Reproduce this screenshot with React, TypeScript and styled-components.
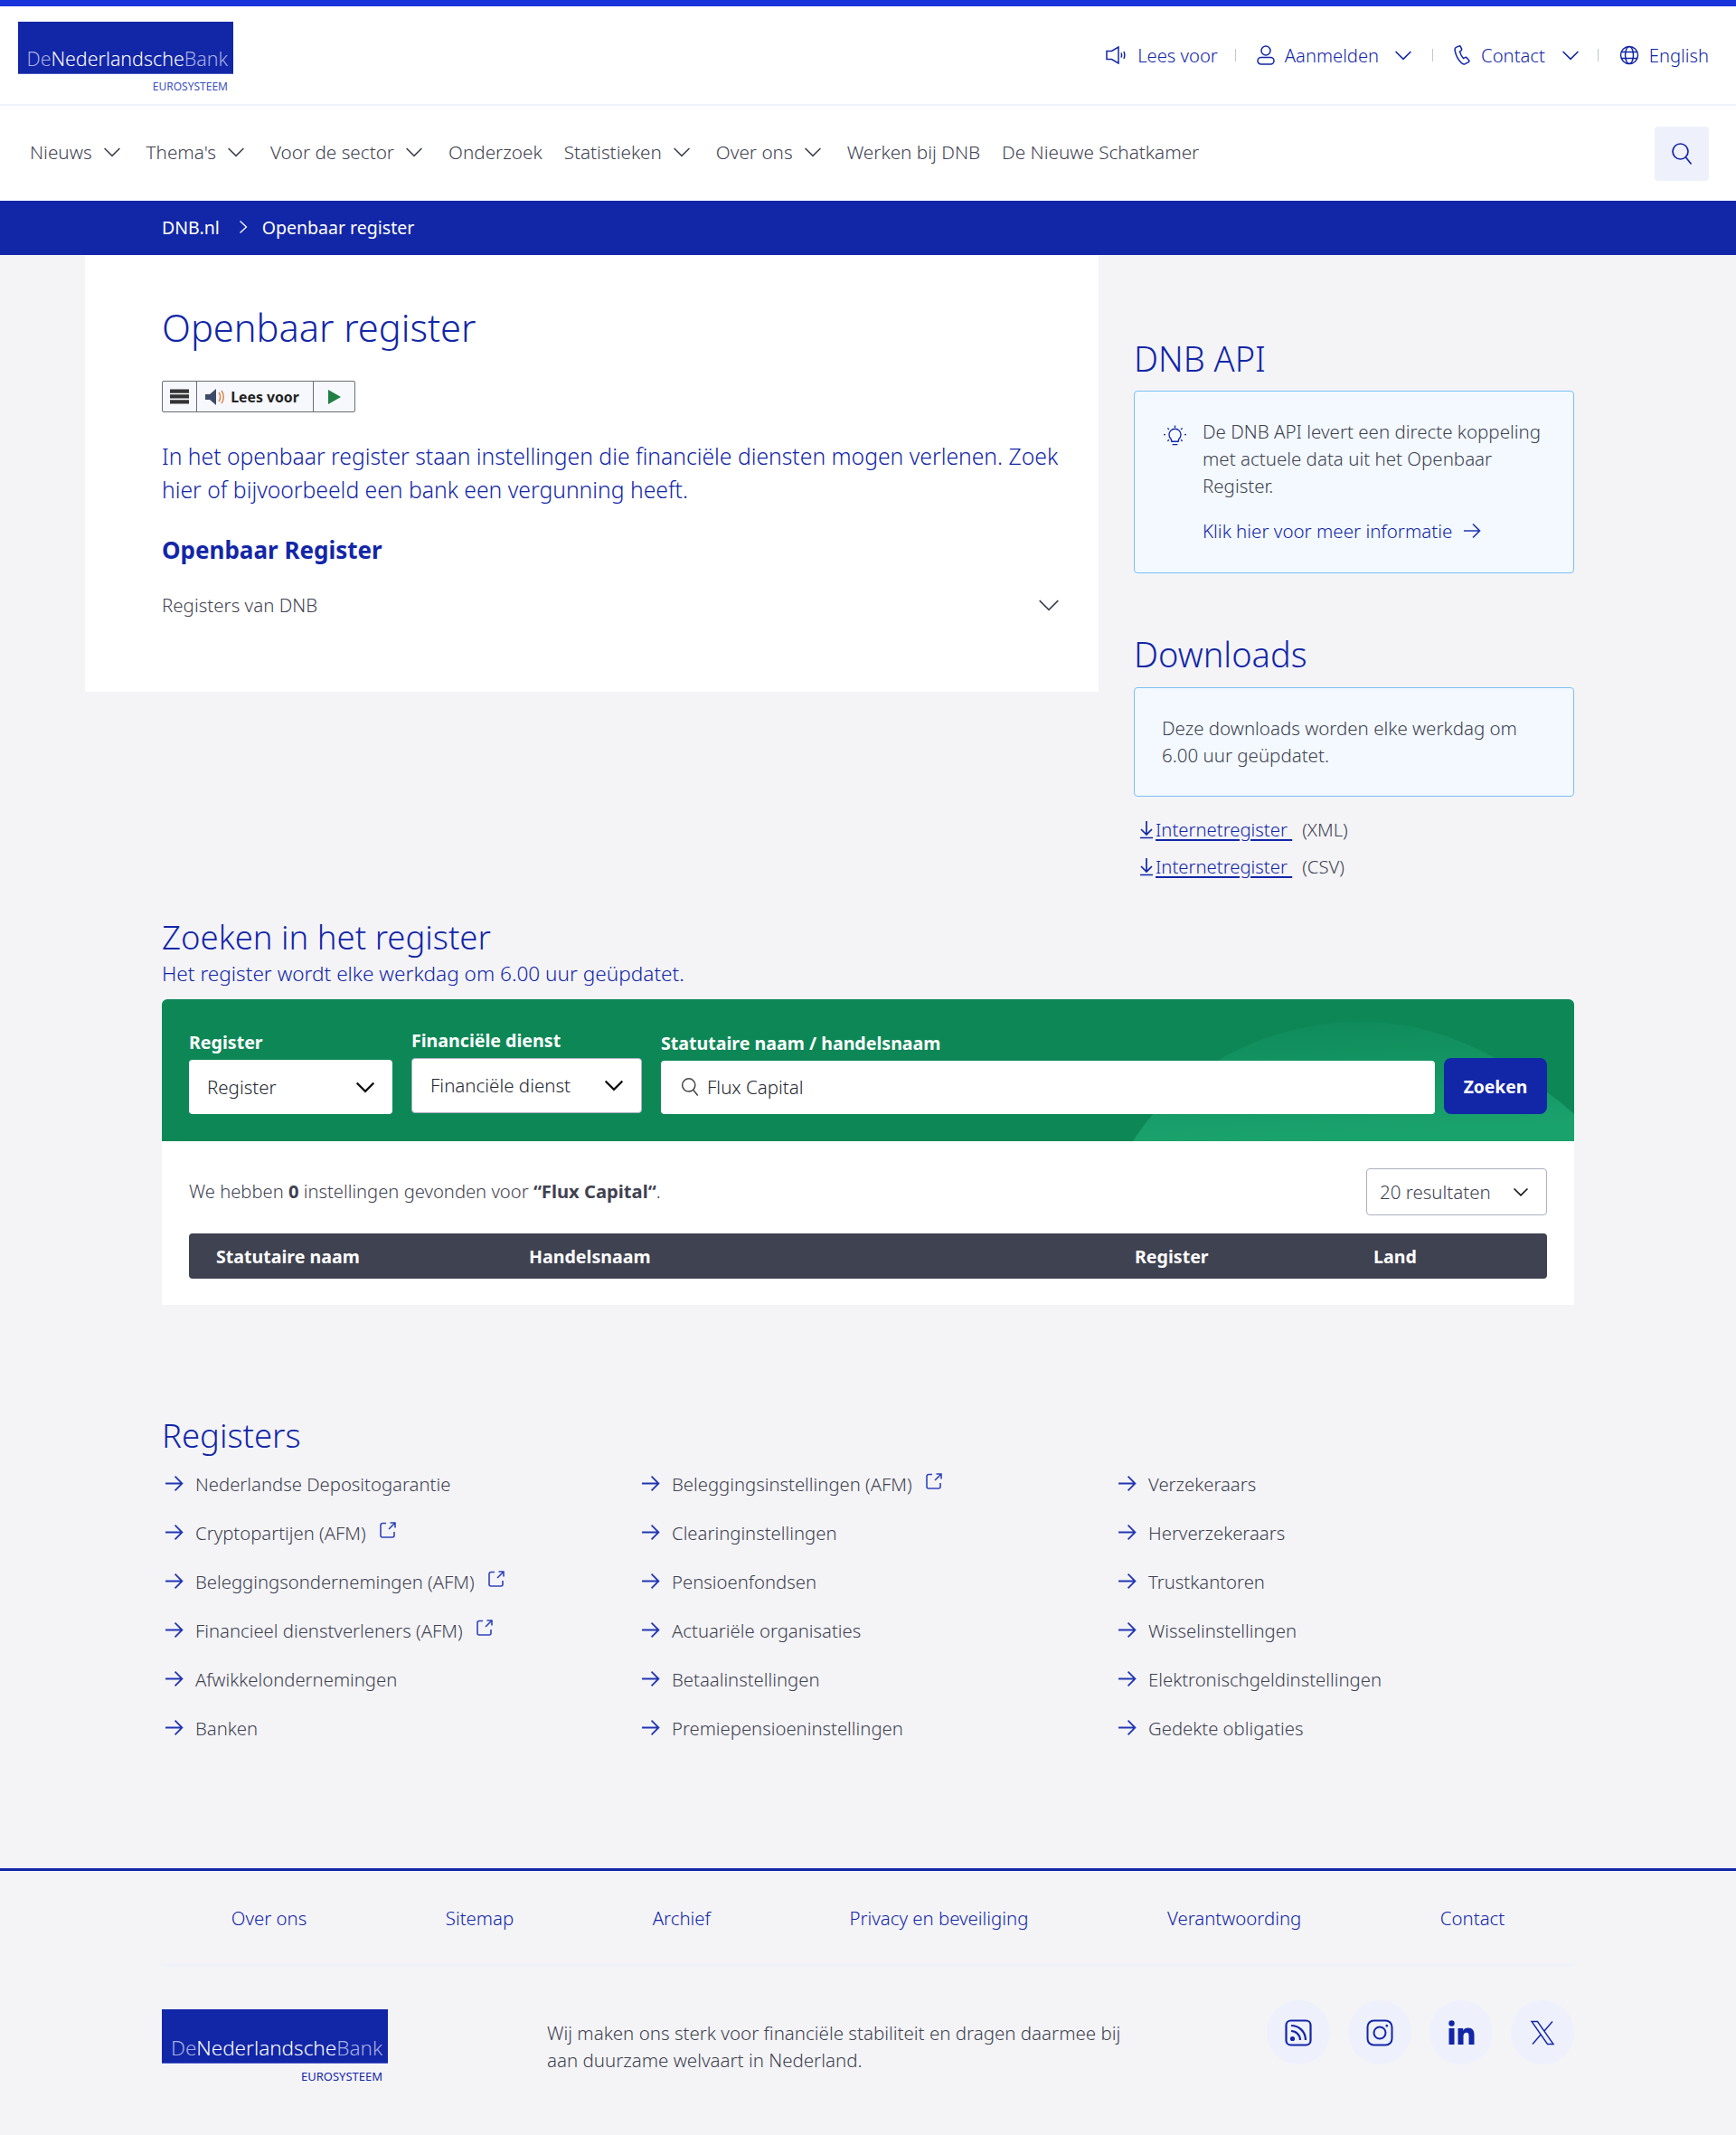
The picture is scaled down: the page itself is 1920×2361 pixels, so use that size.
import React from "react";
import styled, { createGlobalStyle } from "styled-components";

const NAVY = "#1226a8";
const INK = "#3f4251";
const TINT = "#eef0fb";

const Global = createGlobalStyle`
  html, body { margin: 0; padding: 0; background: #f4f4f7; }
  body { font-family: "Noto Sans", "Liberation Sans", sans-serif; font-weight: 300; color: ${INK}; font-size: 20.5px; }
  a { color: inherit; text-decoration: none; }
  * { box-sizing: border-box; }
`;

const Page = styled.div`
  width: 1920px;
  height: 2361px;
  overflow: hidden;
  background: #f4f4f7;
  border-top: 7px solid #1a34dc;
`;

const Utility = styled.div`
  height: 110px;
  background: #fff;
  border-bottom: 2px solid #eef0fb;
  display: flex;
  align-items: center;
  justify-content: space-between;
  padding: 0 30px 0 20px;
`;
const TopLogo = styled.div`
  margin-top: 5px;
`;

const LogoWrap = styled.a<{ $w: number; $h: number; $size: number }>`
  display: block;
  width: ${p => p.$w}px;
  & > div:first-child {
    height: ${p => p.$h}px;
    background: ${NAVY};
    border-bottom: 1px solid #4d5fc4;
    display: flex;
    align-items: flex-end;
    justify-content: flex-end;
    padding: 0 6px 3px 0;
    font-size: ${p => p.$size}px;
    line-height: 1.2;
    font-family: "Noto Sans", sans-serif;
    font-weight: 300;
    color: #fff;
    white-space: nowrap;
  }
`;
const Dim = styled.span`color: #a6aee0;`;
const Euro = styled.div<{ $color: string; $size: number }>`
  text-align: right;
  font-size: ${p => p.$size}px;
  line-height: 14px;
  margin-top: 7px;
  padding-right: 6px;
  font-weight: 400;
  color: ${p => p.$color};
`;

const Utils = styled.div`
  display: flex;
  align-items: center;
  color: ${NAVY};
  font-size: 20.2px;
`;
const UtilLink = styled.a<{ $gap?: number }>`
  display: flex;
  align-items: center;
  gap: ${p => p.$gap ?? 11}px;
  color: ${NAVY};
  white-space: nowrap;
`;
const Sep = styled.span`
  width: 1px;
  height: 14px;
  background: #c3c6d2;
  margin: 0 23px 0 19px;
`;
const UtilChev = styled.span<{ $r: number }>`
  display: flex;
  margin: 0 ${p => p.$r - 2}px 0 7px;
`;

const Nav = styled.nav`
  height: 105px;
  background: #fff;
  display: flex;
  align-items: center;
  justify-content: space-between;
  padding: 0 30px 0 33px;
`;
const NavList = styled.div`
  display: flex;
  align-items: center;
  gap: 24px;
  font-size: 20.7px;
  padding-bottom: 4px;
`;
const NavItem = styled.a`
  display: flex;
  align-items: center;
  gap: 13px;
  white-space: nowrap;
  color: ${INK};
`;
const NavChev = styled.span`
  display: flex;
  margin-right: 5px;
`;
const SearchBtn = styled.button`
  width: 60px;
  height: 60px;
  border: 0;
  background: ${TINT};
  border-radius: 4px;
  display: flex;
  align-items: center;
  justify-content: center;
  color: ${NAVY};
  padding: 0;
`;

const Crumbs = styled.div`
  height: 60px;
  background: ${NAVY};
  color: #fff;
  display: flex;
  align-items: center;
  padding: 0 0 2px 179px;
  font-weight: 400;
  font-size: 19.5px;
`;
const CrumbSep = styled.span`
  display: flex;
  margin: 0 16px 0 21px;
`;

const Top = styled.div`
  display: flex;
  align-items: flex-start;
  gap: 39px;
  padding: 0 179px 0 94px;
`;
const Card = styled.main`
  width: 1121px;
  height: 483px;
  flex: none;
  background: #fff;
  padding: 50px 44px 0 85px;
`;
const H1 = styled.h1`
  margin: 0;
  font-size: 41.6px;
  line-height: 60px;
  font-weight: 300;
  color: ${NAVY};
`;
const Speaker = styled.div`
  margin-top: 29px;
  width: 214px;
  height: 35px;
  display: flex;
  background: #f6f8fd;
  border: 1px solid #6b6d78;
  border-radius: 2px;
  color: #222;
  font-size: 15.8px;
  font-weight: 700;
`;
const SpSeg = styled.div<{ $w: number; $pr?: number }>`
  width: ${p => p.$w}px;
  display: flex;
  align-items: center;
  justify-content: center;
  gap: 6px;
  white-space: nowrap;
  padding-right: ${p => p.$pr ?? 0}px;
  & + & { border-left: 1px solid #6b6d78; }
`;
const Lead = styled.p`
  margin: 30px -12px 0 0;
  font-size: 24.7px;
  line-height: 37px;
  color: ${NAVY};
`;
const H2 = styled.h2`
  margin: 29px 0 0;
  font-size: 26px;
  line-height: 38px;
  font-weight: 700;
  color: ${NAVY};
`;
const Accordion = styled.div`
  margin-top: 28px;
  display: flex;
  justify-content: space-between;
  align-items: center;
  line-height: 28px;
`;

const Side = styled.aside`
  width: 487px;
  flex: none;
  padding-top: 88px;
`;
const SideTitle = styled.h2<{ $mt?: number }>`
  margin: ${p => p.$mt ?? 0}px 0 0;
  font-size: 38px;
  line-height: 52px;
  font-weight: 300;
  color: ${NAVY};
`;
const Note = styled.div<{ $h: number; $mt: number }>`
  height: ${p => p.$h}px;
  margin-top: ${p => p.$mt}px;
  background: #f3f9ff;
  border: 1px solid #79c0f5;
  border-radius: 4px;
  padding: 29px 30px 30px;
  line-height: 30px;
`;
const NoteRow = styled.div`
  display: flex;
  gap: 18px;
  padding-left: 2px;
`;
const NoteIcon = styled.span`
  display: flex;
  flex: none;
  height: 25px;
  margin-top: 8px;
`;
const NoteText = styled.div`
  flex: 1;
`;
const NoteLink = styled.a`
  display: flex;
  align-items: center;
  gap: 12px;
  margin-top: 20px;
  color: ${NAVY};
`;
const Downloads = styled.div`
  margin-top: 15px;
  padding-left: 4px;
`;
const DlRow = styled.div`
  display: flex;
  align-items: center;
  height: 41px;
  font-size: 20.3px;
  gap: 11px;
`;
const DlLink = styled.a`
  display: flex;
  align-items: center;
  color: ${NAVY};
  text-decoration: underline;
  text-underline-offset: 3px;
  white-space: pre;
`;

const Section = styled.section`
  padding: 0 179px;
`;
const SearchHead = styled.div`
  padding-top: 36px;
`;
const H3 = styled.h2`
  margin: 0;
  font-size: 36.5px;
  line-height: 44px;
  font-weight: 300;
  color: ${NAVY};
`;
const Sub = styled.p`
  margin: 2px 0 0;
  font-size: 22.6px;
  line-height: 33px;
  color: ${NAVY};
`;
const Green = styled.form`
  position: relative;
  margin-top: 12px;
  height: 157px;
  background: #0e8757;
  border-radius: 6px 6px 0 0;
  padding: 65px 30px 0;
  display: flex;
  align-items: flex-start;
  overflow: hidden;
`;
const Swoosh = styled.svg`
  position: absolute;
  inset: 0;
  width: 100%;
  height: 100%;
`;
const Field = styled.div<{ $w?: number; $top: number }>`
  position: relative;
  ${p => p.$w ? `width: ${p.$w}px; flex: none;` : "flex: 1;"}
  margin: ${p => p.$top}px ${p => p.$w ? 21 : 10}px 0 0;
`;
const Label = styled.label`
  position: absolute;
  left: 0;
  bottom: calc(100% + 4px);
  color: #fff;
  font-weight: 700;
  line-height: 30px;
  white-space: nowrap;
  font-size: 19.6px;
`;
const Select = styled.div<{ $bordered?: boolean }>`
  height: ${p => p.$bordered ? 61 : 60}px;
  background: #fff;
  border-radius: 4px;
  display: flex;
  align-items: center;
  justify-content: space-between;
  padding: 0 20px 1px;
  color: #24262f;
  ${p => p.$bordered ? "border: 1px solid #adb0c0;" : ""}
`;
const InputBox = styled.div`
  height: 59px;
  background: #fff;
  border-radius: 4px;
  display: flex;
  align-items: center;
  gap: 9px;
  padding: 0 22px 2px;
  color: #24262f;
`;
const Submit = styled.button`
  position: relative;
  flex: none;
  width: 114px;
  height: 62px;
  border: 0;
  border-radius: 8px;
  background: ${NAVY};
  color: #fff;
  font: 700 19.3px "Noto Sans", sans-serif;
`;
const Results = styled.div`
  background: #fff;
  height: 181px;
  padding: 30px;
  font-size: 20.2px;
`;
const ResultsTop = styled.div`
  display: flex;
  align-items: center;
  justify-content: space-between;
  height: 52px;
  & > span { padding-bottom: 2px; }
`;
const Strong = styled.b`font-weight: 700;`;
const PerPage = styled.div`
  width: 200px;
  height: 52px;
  border: 1px solid #adb0c0;
  border-radius: 4px;
  display: flex;
  align-items: center;
  justify-content: space-between;
  padding: 0 20px 1px 14px;
  font-size: 20.5px;
`;
const THead = styled.div`
  margin-top: 20px;
  height: 50px;
  background: ${INK};
  border-radius: 4px;
  color: #fff;
  font-weight: 700;
  font-size: 19.6px;
  display: grid;
  grid-template-columns: 346px 670px 264px 1fr;
  align-items: center;
  padding-left: 30px;
`;

const RegTitle = styled.h2`
  margin: 117px 0 0;
  font-size: 36.5px;
  line-height: 54px;
  font-weight: 300;
  color: ${NAVY};
`;
const RegGrid = styled.div`
  display: grid;
  grid-template-columns: repeat(3, 527px);
  grid-template-rows: repeat(6, 54px);
  grid-auto-flow: column;
  margin: 0 0 0 3px;
  width: 1600px;
  font-size: 20.3px;
`;
const RegItem = styled.a`
  display: flex;
  align-items: center;
  gap: 13px;
  white-space: nowrap;
  padding-bottom: 1px;
`;
const Ext = styled.span`
  display: flex;
  margin-left: 1px;
  transform: translateY(-3px);
  color: #2f43bd;
`;

const Footer = styled.footer`
  margin-top: 128px;
  border-top: 3px solid ${NAVY};
  padding: 0 179px;
`;
const FootLinks = styled.div`
  height: 105px;
  display: flex;
  justify-content: space-around;
  align-items: center;
  border-bottom: 2px solid #eef0fb;
  color: ${NAVY};
  font-size: 20.4px;
  padding-top: 1px;
`;
const FootMain = styled.div`
  display: flex;
  align-items: flex-start;
  padding-top: 38px;
`;
const FootLogo = styled.div`
  width: 426px;
  flex: none;
  padding-top: 10px;
`;
const FootText = styled.p`
  margin: 21px 0 0;
  width: 640px;
  line-height: 30px;
`;
const Socials = styled.div`
  margin-left: auto;
  display: flex;
  gap: 20px;
`;
const Social = styled.a`
  width: 70px;
  height: 71px;
  border-radius: 50%;
  background: ${TINT};
  color: ${NAVY};
  display: flex;
  align-items: center;
  justify-content: center;
`;

const Chev = ({ s = 18, c = "currentColor", w = 1.6 }: { s?: number; c?: string; w?: number }) => (
  <svg width={s} height={s} viewBox="0 0 18 18" fill="none" stroke={c} strokeWidth={w}>
    <path d="M.6 5 9 13.400 17.400 5" />
  </svg>
);
const Arrow = ({ s = 21 }: { s?: number }) => (
  <svg width={s} height={s} viewBox="0 0 20 20" fill="none" stroke="#2236b4" strokeWidth="1.7">
    <path d="M1 10h17M11 2.500l7.500 7.500-7.500 7.500" />
  </svg>
);
const Logo = ({ w, h, size, euro, euroSize }: { w: number; h: number; size: number; euro: string; euroSize: number }) => (
  <LogoWrap $w={w} $h={h} $size={size}>
    <div><span><Dim>De</Dim>Nederlandsche<Dim>Bank</Dim></span></div>
    <Euro $color={euro} $size={euroSize}>EUROSYSTEEM</Euro>
  </LogoWrap>
);
const ExtIcon = () => (
  <Ext>
    <svg width="20" height="20" viewBox="0 0 20 20" fill="none" stroke="currentColor" strokeWidth="1.6">
      <path d="M8 2.500H4a2 2 0 0 0-2 2V16a2 2 0 0 0 2 2h11a2 2 0 0 0 2-2v-4" />
      <path d="M11 9l6.500-6.500M12.500 2h5.500v5.500" />
    </svg>
  </Ext>
);
const Down = () => (
  <svg width="20" height="22" viewBox="0 0 20 22" fill="none" stroke={NAVY} strokeWidth="1.7">
    <path d="M10 2v15M4 11l6 6 6-6M3 20.500h14" />
  </svg>
);

const nav: [string, boolean][] = [
  ["Nieuws", true], ["Thema's", true], ["Voor de sector", true], ["Onderzoek", false],
  ["Statistieken", true], ["Over ons", true], ["Werken bij DNB", false], ["De Nieuwe Schatkamer", false],
];
const regs: [string, boolean][] = [
  ["Nederlandse Depositogarantie", false], ["Cryptopartijen (AFM)", true], ["Beleggingsondernemingen (AFM)", true],
  ["Financieel dienstverleners (AFM)", true], ["Afwikkelondernemingen", false], ["Banken", false],
  ["Beleggingsinstellingen (AFM)", true], ["Clearinginstellingen", false], ["Pensioenfondsen", false],
  ["Actuariële organisaties", false], ["Betaalinstellingen", false], ["Premiepensioeninstellingen", false],
  ["Verzekeraars", false], ["Herverzekeraars", false], ["Trustkantoren", false],
  ["Wisselinstellingen", false], ["Elektronischgeldinstellingen", false], ["Gedekte obligaties", false],
];

export default function App() {
  return (
    <Page>
      <Global />
      <Utility>
        <TopLogo><Logo w={238} h={58} size={21.4} euro="#3b50c0" euroSize={12} /></TopLogo>
        <Utils>
          <UtilLink $gap={13}>
            <svg width="22" height="20" viewBox="0 0 22 20" fill="none" stroke="currentColor" strokeWidth="1.5">
              <path d="M1 5.500h5.500L14 1v18l-7.500-4.500H1zM17 7.500c.7 1.500.7 3.500 0 5M20 6c1 2.500 1 5.500 0 8" />
            </svg>
            Lees voor
          </UtilLink>
          <Sep />
          <UtilLink>
            <svg width="20" height="22" viewBox="0 0 20 22" fill="none" stroke="currentColor" strokeWidth="1.5">
              <circle cx="10" cy="6" r="5" />
              <rect x="1" y="13.500" width="18" height="7.500" rx="3.750" />
            </svg>
            Aanmelden
            <UtilChev $r={6}><Chev /></UtilChev>
          </UtilLink>
          <Sep />
          <UtilLink $gap={12}>
            <svg width="18" height="22" viewBox="0 0 16 20" fill="none" stroke="currentColor" strokeWidth="1.4">
              <path d="M4.600 1 2 2.200C.9 2.800.6 4 .9 5.500c.9 4.600 3.200 9 6.400 12.300 1.200 1.200 2.500 1.600 3.800 1l3.500-1.800c.7-.5.8-1.300.2-2l-2-2.300c-.5-.6-1.300-.7-2-.3l-1.500.8C7.700 11.500 6.300 8.800 5.700 6.300l1.300-.8c.6-.4.8-1.100.6-1.800L6.500 1.500C6.200.9 5.300.7 4.600 1z" />
            </svg>
            Contact
            <UtilChev $r={4}><Chev /></UtilChev>
          </UtilLink>
          <Sep />
          <UtilLink>
            <svg width="22" height="22" viewBox="0 0 22 22" fill="none" stroke="currentColor" strokeWidth="1.5">
              <circle cx="11" cy="11" r="9.500" />
              <ellipse cx="11" cy="11" rx="4.500" ry="9.500" />
              <path d="M2 7.500h18M2 14.500h18" />
            </svg>
            English
          </UtilLink>
        </Utils>
      </Utility>

      <Nav>
        <NavList>
          {nav.map(([t, c]) => (
            <NavItem key={t}>{t}{c && <NavChev><Chev /></NavChev>}</NavItem>
          ))}
        </NavList>
        <SearchBtn aria-label="Zoeken">
          <svg width="24" height="26" viewBox="0 0 24 26" fill="none" stroke="currentColor" strokeWidth="1.7">
            <circle cx="10.500" cy="10.500" r="8.500" />
            <path d="m16.500 17 6 7.500" />
          </svg>
        </SearchBtn>
      </Nav>

      <Crumbs>
        <a>DNB.nl</a>
        <CrumbSep>
          <svg width="10" height="16" viewBox="0 0 10 16" fill="none" stroke="#fff" strokeWidth="1.300"><path d="m1.500 1.500 7 6.500-7 6.500" /></svg>
        </CrumbSep>
        <span>Openbaar register</span>
      </Crumbs>

      <Top>
        <Card>
          <H1>Openbaar register</H1>
          <Speaker>
            <SpSeg $w={37}>
              <svg width="21" height="17" viewBox="0 0 22 17" fill="#333"><path d="M0 0h22v4.500H0zM0 6.200h22v4.500H0zM0 12.400h22v4.500H0z" /></svg>
            </SpSeg>
            <SpSeg $w={129} $pr={6}>
              <svg width="22" height="18" viewBox="0 0 22 18">
                <path d="M0 6h5l7-6v18l-7-6H0z" fill="#3d4a68" />
                <path d="M15 4c2 3 2 7 0 10M18 2c3 4 3 10 0 14" fill="none" stroke="#d9854a" strokeWidth="1.500" />
              </svg>
              Lees voor
            </SpSeg>
            <SpSeg $w={46}>
              <svg width="14" height="16" viewBox="0 0 14 16"><path d="M0 0l14 8-14 8z" fill="#1f7f45" /></svg>
            </SpSeg>
          </Speaker>
          <Lead>In het openbaar register staan instellingen die financiële diensten mogen verlenen. Zoek hier of bijvoorbeeld een bank een vergunning heeft.</Lead>
          <H2>Openbaar Register</H2>
          <Accordion>
            Registers van DNB
            <Chev s={22} w={1.400} />
          </Accordion>
        </Card>
        <Side>
          <SideTitle>DNB API</SideTitle>
          <Note $h={202} $mt={10}>
            <NoteRow>
              <NoteIcon>
                <svg width="25" height="25" viewBox="0 0 26 26" fill="none" stroke={NAVY} strokeWidth="1.400">
                  <path d="M8.500 16c-1.500-1.300-2.300-3-2.300-4.800a6.800 6.800 0 0 1 13.600 0c0 1.800-.8 3.500-2.300 4.800l-.7 3h-7.600zM10 22.500h6M13 .5v2.500M2 11h-2M26 11h-2M4.500 3.500l1.700 1.700M21.500 3.500l-1.700 1.700M4.500 18.500l1.700-1.700M21.500 18.500l-1.700-1.700" />
                </svg>
              </NoteIcon>
              <NoteText>
                De DNB API levert een directe koppeling met actuele data uit het Openbaar Register.
                <NoteLink>Klik hier voor meer informatie <Arrow s={20} /></NoteLink>
              </NoteText>
            </NoteRow>
          </Note>
          <SideTitle $mt={63}>Downloads</SideTitle>
          <Note $h={121} $mt={11}>Deze downloads worden elke werkdag om 6.00 uur geüpdatet.</Note>
          <Downloads>
            <DlRow><DlLink><Down />Internetregister </DlLink>(XML)</DlRow>
            <DlRow><DlLink><Down />Internetregister </DlLink>(CSV)</DlRow>
          </Downloads>
        </Side>
      </Top>

      <Section>
        <SearchHead>
          <H3>Zoeken in het register</H3>
          <Sub>Het register wordt elke werkdag om 6.00 uur geüpdatet.</Sub>
        </SearchHead>
        <Green>
          <Swoosh viewBox="0 0 1562 157" preserveAspectRatio="none">
            <defs>
              <linearGradient id="sw" x1="0" y1="0" x2="0.15" y2="1">
                <stop offset="0" stopColor="#0f8a5a" />
                <stop offset="1" stopColor="#1aa26d" />
              </linearGradient>
            </defs>
            <path d="M1074 157C1130 70 1230 25 1327 25c100 0 180 55 235 102v30z" fill="url(#sw)" />
          </Swoosh>
          <Field $w={225} $top={2}>
            <Label>Register</Label>
            <Select>Register<Chev s={20} c="#111" w={2} /></Select>
          </Field>
          <Field $w={255} $top={0}>
            <Label>Financiële dienst</Label>
            <Select $bordered>Financiële dienst<Chev s={20} c="#111" w={2} /></Select>
          </Field>
          <Field $top={3}>
            <Label>Statutaire naam / handelsnaam</Label>
            <InputBox>
              <svg width="20" height="22" viewBox="0 0 24 26" fill="none" stroke="#444" strokeWidth="1.800">
                <circle cx="10.500" cy="10.500" r="8.500" />
                <path d="m16.500 17 6 7.500" />
              </svg>
              Flux Capital
            </InputBox>
          </Field>
          <Submit type="button">Zoeken</Submit>
        </Green>
        <Results>
          <ResultsTop>
            <span>We hebben <Strong>0</Strong> instellingen gevonden voor <Strong>“Flux Capital“</Strong>.</span>
            <PerPage>20 resultaten <Chev s={16} c="#111" w={1.800} /></PerPage>
          </ResultsTop>
          <THead>
            <span>Statutaire naam</span>
            <span>Handelsnaam</span>
            <span>Register</span>
            <span>Land</span>
          </THead>
        </Results>
        <RegTitle>Registers</RegTitle>
        <RegGrid>
          {regs.map(([t, e]) => (
            <RegItem key={t}><Arrow />{t}{e && <ExtIcon />}</RegItem>
          ))}
        </RegGrid>
      </Section>

      <Footer>
        <FootLinks>
          <a>Over ons</a><a>Sitemap</a><a>Archief</a><a>Privacy en beveiliging</a><a>Verantwoording</a><a>Contact</a>
        </FootLinks>
        <FootMain>
          <FootLogo><Logo w={250} h={60} size={22.5} euro={NAVY} euroSize={13} /></FootLogo>
          <FootText>Wij maken ons sterk voor financiële stabiliteit en dragen daarmee bij aan duurzame welvaart in Nederland.</FootText>
          <Socials>
            <Social aria-label="RSS">
              <svg width="30" height="30" viewBox="0 0 30 30" fill="none" stroke="currentColor" strokeWidth="2.200">
                <rect x="1.500" y="1.500" width="27" height="27" rx="5" />
                <path d="M7 13c5.500 0 10 4.500 10 10M7 7c9 0 16 7 16 16" />
                <circle cx="8.500" cy="21.500" r="1.500" fill="currentColor" />
              </svg>
            </Social>
            <Social aria-label="Instagram">
              <svg width="30" height="30" viewBox="0 0 30 30" fill="none" stroke="currentColor" strokeWidth="2">
                <rect x="1.500" y="1.500" width="27" height="27" rx="7" />
                <circle cx="15" cy="15" r="6.500" />
                <circle cx="22.800" cy="7.200" r="1" fill="currentColor" strokeWidth="1" />
              </svg>
            </Social>
            <Social aria-label="LinkedIn">
              <svg width="30" height="30" viewBox="0 0 30 30" fill="currentColor">
                <circle cx="4.500" cy="4.500" r="3.200" />
                <path d="M1.500 10h6v18h-6zM11.500 10h5.700v2.600c1-1.800 3-3 5.500-3 5 0 6.800 3.200 6.800 8V28h-6v-9.300c0-2.300-.6-3.900-2.600-3.900-2.300 0-3.400 1.700-3.400 4V28h-6z" />
              </svg>
            </Social>
            <Social aria-label="X">
              <svg width="28" height="28" viewBox="0 0 28 28" fill="none" stroke="currentColor" strokeWidth="1.400">
                <path d="M2 1.500h6.500L26 26.500h-6.500zM25 1.500 15.500 12.500M12 16 3 26.500" />
              </svg>
            </Social>
          </Socials>
        </FootMain>
      </Footer>
    </Page>
  );
}
